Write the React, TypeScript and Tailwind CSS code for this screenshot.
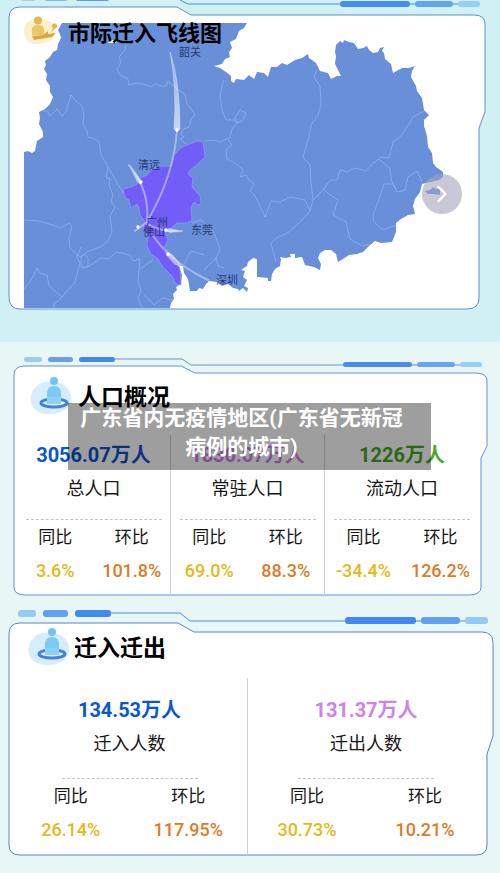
import React from "react";
import { ChevronRight } from "lucide-react";

const FONT = "font-[Roboto,'Noto_Sans_CJK_SC',sans-serif]";

const LAND =
  "M62 23 L58 30 L60 34 L61 38 L58 44 L57 50 L53 52 L50 57 L45 61 L46 65 L44 69 L47 74 L46 80 L50 86 L50 92 L53 97 L50 104 L45 109 L39 112 L40 118 L39 124 L43 132 L43 137 L37 141 L35 151 L32 153 L28 151 L24 152 V308 H170 L171 303 L174 299 L173 294 L177 290 L176 287 L181 284 L182 275 L179 266 L183 266 L184 273 L188 279 L190 291 L197 291 L199 288 L203 289 L206 284 L209 281 L217 282 L222 286 L228 284 L233 288 L238 289 L239 291 L243 288 L247 292 L248 288 L244 286 L247 280 L243 277 L245 271 L241 270 L247 266 L248 262 L253 258 L257 259 L257 277 L268 278 L268 281 L271 281 L272 274 L275 269 L280 266 L281 259 L280 257 L285 258 L291 257 L290 254 L295 254 L295 258 L302 257 L305 265 L314 267 L320 270 L321 264 L318 258 L320 253 L325 250 L331 250 L336 254 L338 262 L343 259 L349 255 L357 254 L363 252 L369 246 L375 241 L381 243 L392 242 L396 232 L396 223 L401 219 L408 215 L415 214 L413 206 L415 199 L420 192 L422 184 L426 183 L439 180 L443 177 L443 172 L436 167 L433 163 L432 153 L428 147 L427 136 L424 126 L424 120 L429 115 L424 110 L422 98 L417 91 L416 86 L411 77 L412 71 L415 66 L409 68 L402 68 L393 73 L391 64 L385 59 L384 53 L382 51 L384 47 L380 48 L378 52 L373 53 L369 50 L367 46 L363 48 L358 49 L354 43 L349 42 L344 40 L343 43 L340 41 L336 45 L335 52 L336 56 L335 64 L341 76 L337 76 L331 79 L328 73 L320 71 L316 63 L309 58 L308 54 L302 58 L295 60 L287 65 L282 63 L277 67 L271 67 L268 77 L264 73 L257 72 L254 79 L249 75 L244 80 L236 79 L234 83 L231 81 L231 76 L226 72 L220 68 L214 66 L222 64 L225 59 L230 57 L229 52 L232 48 L230 42 L236 39 L239 31 L244 28 L247 23 Z";

const BORDERS = [
  "M126 43 L125 50 L119 57 L121 62 L117 70 L121 76 L128 79 L129 85 L137 83 L146 85 L151 87 L155 84 L165 87 L168 81 L175 87 L180 91 L185 94 L187 104 L192 110 L195 115 L191 119 L189 127 L182 130 L181 135 L184 137 L180 139 L186 144",
  "M42 111 L47 111 L50 116 L57 109 L62 116 L66 112 L68 105 L71 95 L76 101 L82 106 L84 115 L83 124 L87 131 L88 137 L93 138 L99 142 L101 155 L108 167 L106 177 L110 179 L109 185 L113 195 L111 202 L115 207 L110 216 L112 232 L108 241 L102 246 L87 252 L80 257 L70 248 L69 238 L72 226 L69 223 L61 228 L53 225 L38 221 L24 220",
  "M24 289 L31 280 L37 268 L40 273 L47 275 L49 286 L62 297 L58 301 L54 303 L54 308",
  "M62 297 L75 282 L80 263 L77 257 L81 247 M80 266 L85 268 L91 265 L101 258 L108 259 L117 252 L130 255 L133 261 L140 259 L139 269 L138 281 L141 291 L138 298 L142 308 M140 269 L153 260",
  "M81 257 L84 254 L88 258 L88 266 L83 268 L81 264 Z",
  "M108 167 L123 193 M144 294 L154 305 L162 298 L173 300",
  "M204 141 L214 140 L220 142 L226 139 L230 138 L232 129 L238 122 L234 120 L226 120 L222 110 L220 96 L222 86 L224 80",
  "M228 140 L232 145 L226 150 L227 159 L238 165 L243 170 L240 177 L246 175 L249 180 L254 184 L250 191 L255 196 L260 206 L265 217 L271 201 L280 202 L290 197 L305 200 L310 211 L299 223 L289 232 L275 239 L271 244 L276 262",
  "M317 70 L314 77 L320 86 L321 105 L318 115 L311 125 L309 137 L303 157 L310 165 L311 183 L313 200 L310 211 M313 200 L323 190 L327 184 L331 180 L337 180 L340 170 L347 172 L355 168 L366 171 L373 163 L379 159 M379 157 L389 158 L393 142 L401 136 L409 124 L413 117 L424 111",
  "M323 188 L330 195 L338 200 L333 215 L346 222 L350 239 L363 246 L370 244",
  "M379 159 L390 169 L392 182 L397 192 L405 190 L408 177 L417 171 L422 182 M397 190 L393 184 L384 184 L379 199 L373 215 L374 222 L383 230 L396 225",
  "M192 223 L201 220 L213 231 L218 243 L220 250 L216 258 L204 270 M216 258 L218 266 L224 268 M204 255 L191 251 L184 264 M167 249 L169 254",
  "M235 118 L240 110 L246 113 L242 121 L237 123 Z",
];

const GUANGZHOU =
  "M192 143 L198 141 L203 142 L204 149 L205 157 L200 162 L195 166 L190 170 L188 174 L193 178 L192 187 L197 193 L200 196 L201 203 L198 205 L194 202 L191 207 L192 221 L185 223 L177 223 L170 229 L165 232 L168 240 L164 248 L169 254 L177 260 L180 270 L181 285 L176 284 L172 276 L163 267 L158 259 L150 253 L147 245 L148 237 L143 228 L145 222 L140 215 L139 208 L137 204 L131 208 L129 200 L125 197 L123 189 L131 187 L137 184 L140 178 L147 175 L152 169 L162 166 L171 166 L174 155 L182 147 Z";

const CITIES: { name: string; x: number; y: number }[] = [
  { name: "韶关", x: 190, y: 56 },
  { name: "清远", x: 149, y: 169 },
  { name: "广州", x: 157, y: 226 },
  { name: "佛山", x: 154, y: 236 },
  { name: "东莞", x: 202, y: 234 },
  { name: "深圳", x: 227, y: 284 },
];

function MigrationMap() {
  return (
    <svg viewBox="0 0 500 341" className="block w-full" role="img" aria-label="市际迁入飞线图">
      <defs>
        <linearGradient id="trailDown" x1="0" y1="0" x2="0" y2="1">
          <stop offset="0" stopColor="#fff" stopOpacity="0.3" />
          <stop offset="1" stopColor="#fff" stopOpacity="0.65" />
        </linearGradient>
      </defs>
      <path
        d="M20 7 H177 L191 15 H474 Q485 15 485 24 V112 L479 128 V298 Q479 309 467 309 H20 Q9 309 9 297 V18 Q9 7 20 7 Z"
        fill="#fff"
        stroke="#5f8ed0"
      />
      <path d="M180 0 L188 4 H460" fill="none" stroke="#4b8fcd" />
      <g>
        <rect x="21" y="-4" width="15" height="5" rx="2" fill="#a2d5f5" />
        <rect x="45" y="-4" width="22" height="5" rx="2" fill="#78b4f0" />
        <rect x="76" y="-4" width="33" height="5" rx="2" fill="#5c9ded" />
        <rect x="340" y="1" width="70" height="6" rx="3" fill="#478ee8" />
        <rect x="415" y="1" width="38" height="6" rx="3" fill="#66a5ed" />
        <rect x="458" y="1" width="22" height="6" rx="3" fill="#98cdf6" />
      </g>
      <path d={LAND} fill="#688fd8" />
      <path d="M108 43 L110 40 H117 L116 43 Z" fill="#fff" />
      <path d="M425 191 L430 190 L433 187 L436 189 L440 189 L440 195 L434 194 L428 194 Z" fill="#688fd8" />
      <g fill="none" stroke="#8eb0ed" strokeWidth="0.8" strokeLinejoin="round">
        {BORDERS.map((d) => (
          <path key={d} d={d} />
        ))}
      </g>
      <path d={GUANGZHOU} fill="#735df8" stroke="#93a4f3" strokeWidth="0.6" />
      <g fill="none" stroke="#d2dbff" strokeOpacity="0.55" strokeWidth="2" strokeLinecap="round">
        <path d="M177 130 Q174 175 148 220" />
        <path d="M129 165 Q150 190 147 222" />
        <path d="M182 231 Q164 233 147 224" />
        <path d="M208 280 Q170 262 152 234" />
        <path d="M135 231 L147 222" />
      </g>
      <path d="M170 52 Q180 80 180 129 L177 132 L174 129 Q177 90 170 52 Z" fill="url(#trailDown)" stroke="#fff" strokeOpacity="0.3" />
      <path d="M129 165 L142 181 L141 185 L137 182 Z" fill="#fff" fillOpacity="0.5" />
      <path d="M182 231 L170 233 L165 230 L169 228 Z" fill="#fff" fillOpacity="0.5" />
      <path d="M184 269 L174 264 L166 255 L167 252 L172 254 Z" fill="#fff" fillOpacity="0.5" />
      <g fill="#fff">
        <circle cx="177" cy="130" r="1.7" />
        <circle cx="141" cy="182" r="1.7" />
        <circle cx="166" cy="230" r="1.7" />
        <circle cx="168" cy="254" r="1.7" />
        <circle cx="138" cy="227" r="1.7" />
      </g>
      <g fill="#26396e" className="text-[11px]" textAnchor="middle">
        {CITIES.map((c) => (
          <text key={c.name} x={c.x} y={c.y}>
            {c.name}
          </text>
        ))}
      </g>
    </svg>
  );
}

function TravelIcon() {
  return (
    <svg viewBox="0 0 34 30" className="h-[30px] w-[34px]" aria-hidden="true">
      <path d="M8 4 Q19 0 28 6 Q35 13 31 21 Q25 29 12 28 Q2 27 1 17 Q0 7 8 4 Z" fill="#faefcf" />
      <circle cx="15" cy="4.5" r="4" fill="#e3b84f" />
      <path d="M9 19 V13 Q9 9 15 9 Q21 9 21 14 V19 Z" fill="#ecc566" />
      <path d="M9 20 L20 19 L25 15 L25 18 L33 17 L29 21 L11 24 Z" fill="#dfa637" />
      <path d="M28 16 L30 12 A2.5 2.5 0 1 1 33 12 Z" fill="#e6b84b" />
    </svg>
  );
}

function PeopleIcon() {
  return (
    <svg viewBox="0 0 42 38" className="h-[38px] w-[42px]" aria-hidden="true">
      <path d="M9 7 Q22 1 34 8 Q43 15 41 25 Q37 35 23 37 Q8 38 3 30 Q-4 17 9 7 Z" fill="#d5edfc" />
      <ellipse cx="24" cy="26" rx="13" ry="4" fill="none" stroke="#4482d6" strokeWidth="3" />
      <path d="M17 27 V17 Q17 9 24 9 Q31 9 31 17 V27 Z" fill="#7dcaf5" />
      <circle cx="24" cy="4" r="4" fill="#70c3f3" />
      <path d="M17 20 V27 H31 V20 Z" fill="#8dd1f6" />
    </svg>
  );
}

type Stat = {
  value: string;
  label: string;
  color: string;
  yoy: string;
  mom: string;
};

const POPULATION: Stat[] = [
  { value: "3056.07万人", label: "总人口", color: "text-[#0a56cc]", yoy: "3.6%", mom: "101.8%" },
  { value: "1830.07万人", label: "常驻人口", color: "text-[#cc84e6]", yoy: "69.0%", mom: "88.3%" },
  { value: "1226万人", label: "流动人口", color: "text-[#46a81f]", yoy: "-34.4%", mom: "126.2%" },
];

const MIGRATION: Stat[] = [
  { value: "134.53万人", label: "迁入人数", color: "text-[#0a56cc]", yoy: "26.14%", mom: "117.95%" },
  { value: "131.37万人", label: "迁出人数", color: "text-[#cc84e6]", yoy: "30.73%", mom: "10.21%" },
];

function StatColumn({ stat, roomy = false }: { stat: Stat; roomy?: boolean }) {
  return (
    <div className="text-center">
      <p className={`text-[20px] leading-8 font-bold ${stat.color}`}>{stat.value}</p>
      <p className="text-[18px] leading-9 text-[#161616]">{stat.label}</p>
      <div
        className={`mx-auto w-[136px] border-t border-dashed border-[#c4c4c4] ${roomy ? "mt-4" : "mt-3"}`}
      />
      <dl className="grid grid-cols-2">
        <div>
          <dt className="text-[17px] leading-[34px] text-[#161616]">同比</dt>
          <dd className="text-[18px] leading-[34px] font-medium text-[#e4b91c]">{stat.yoy}</dd>
        </div>
        <div>
          <dt className="text-[17px] leading-[34px] text-[#161616]">环比</dt>
          <dd className="text-[18px] leading-[34px] font-medium text-[#dc7b27]">{stat.mom}</dd>
        </div>
      </dl>
    </div>
  );
}

function PopulationFrame() {
  return (
    <svg
      viewBox="0 0 500 262"
      preserveAspectRatio="none"
      className="absolute inset-0 h-full w-full"
      aria-hidden="true"
    >
      <rect width="500" height="1" fill="#cdeef6" />
      <path d="M115 18 H182 L191 24 H460" fill="none" stroke="#6495d0" />
      <rect x="24" y="16" width="18" height="5" rx="2.5" fill="#9bcdf3" />
      <rect x="48" y="16" width="25" height="5" rx="2.5" fill="#689fe8" />
      <rect x="79" y="16" width="36" height="5" rx="2.5" fill="#4788e0" />
      <rect x="343" y="21" width="69" height="5" rx="2.5" fill="#4a8eea" />
      <rect x="417" y="21" width="38" height="5" rx="2.5" fill="#69a5ed" />
      <rect x="460" y="21" width="22" height="5" rx="2.5" fill="#98cdf6" />
      <path
        d="M25 25 H181 L195 32 H476 Q487 32 487 40 V105 L481 117 V246 Q481 254 469 254 H25 Q14 254 14 246 V34 Q14 25 25 25 Z"
        fill="#fff"
        stroke="#6293d1"
      />
    </svg>
  );
}

function MigrationFrame() {
  return (
    <svg
      viewBox="0 0 500 270"
      preserveAspectRatio="none"
      className="absolute inset-0 h-full w-full"
      aria-hidden="true"
    >
      <path d="M111 10 H180 L190 18 H465" fill="none" stroke="#4f8cd6" />
      <rect x="18" y="7" width="18" height="7" rx="3" fill="#97c9f5" />
      <rect x="43" y="7" width="25" height="7" rx="3" fill="#629ff0" />
      <rect x="75" y="7" width="36" height="7" rx="3" fill="#438af0" />
      <rect x="345" y="14" width="71" height="7" rx="3" fill="#438af0" />
      <rect x="421" y="14" width="39" height="7" rx="3" fill="#629ff0" />
      <rect x="465" y="14" width="23" height="7" rx="3" fill="#92caf8" />
      <path
        d="M20 20 H178 L194 29 H482 Q493 29 493 40 V133 L487 151 V242 Q487 252 476 252 H20 Q9 252 9 242 V31 Q9 20 20 20 Z"
        fill="#fff"
        stroke="#5686cb"
      />
    </svg>
  );
}

export default function App() {
  return (
    <main className={`bg-[#e8f6f6] ${FONT}`}>
      <section className="relative bg-[#d0f0f3]">
        <MigrationMap />
        <header className="absolute top-4 left-[23px] flex items-start gap-[11px]">
          <TravelIcon />
          <h2 className="text-[22px] leading-9 font-bold text-black">市际迁入飞线图</h2>
        </header>
        <button
          type="button"
          aria-label="下一页"
          className="absolute top-[174px] right-[38px] flex size-10 items-center justify-center rounded-full bg-[#a3a3bb]/60 text-white"
        >
          <ChevronRight size={28} />
        </button>
      </section>

      <section className="relative pb-2">
        <PopulationFrame />
        <div className="relative">
          <header className="flex items-start gap-1.5 pt-9 pl-[30px]">
            <PeopleIcon />
            <h2 className="text-[23px] leading-[42px] font-bold text-black">人口概况</h2>
          </header>
          <div className="mr-[21px] ml-[17px] grid grid-cols-3 divide-x divide-[#d2d2d2] pt-4">
            {POPULATION.map((s) => (
              <div key={s.label} className="pt-1 pb-[7px]">
                <StatColumn stat={s} />
              </div>
            ))}
          </div>
        </div>
        <div className="absolute top-[62px] right-[69px] left-[68px] bg-black/38 pt-px pr-4 pb-2">
          <h1 className="text-center text-[21px] leading-[29px] font-bold text-white">
            广东省内无疫情地区(广东省无新冠
            <br />
            病例的城市)
          </h1>
        </div>
      </section>

      <section className="relative pb-[18px]">
        <MigrationFrame />
        <div className="relative">
          <header className="flex items-start gap-1 pt-[25px] pl-[28px]">
            <PeopleIcon />
            <h2 className="text-[23px] leading-[42px] font-bold text-black">迁入迁出</h2>
          </header>
          <div className="mr-4 ml-3 grid grid-cols-2 divide-x divide-[#d2d2d2] pt-2">
            {MIGRATION.map((s) => (
              <div key={s.label} className="pt-4 pb-2">
                <StatColumn stat={s} roomy />
              </div>
            ))}
          </div>
        </div>
      </section>
    </main>
  );
}
